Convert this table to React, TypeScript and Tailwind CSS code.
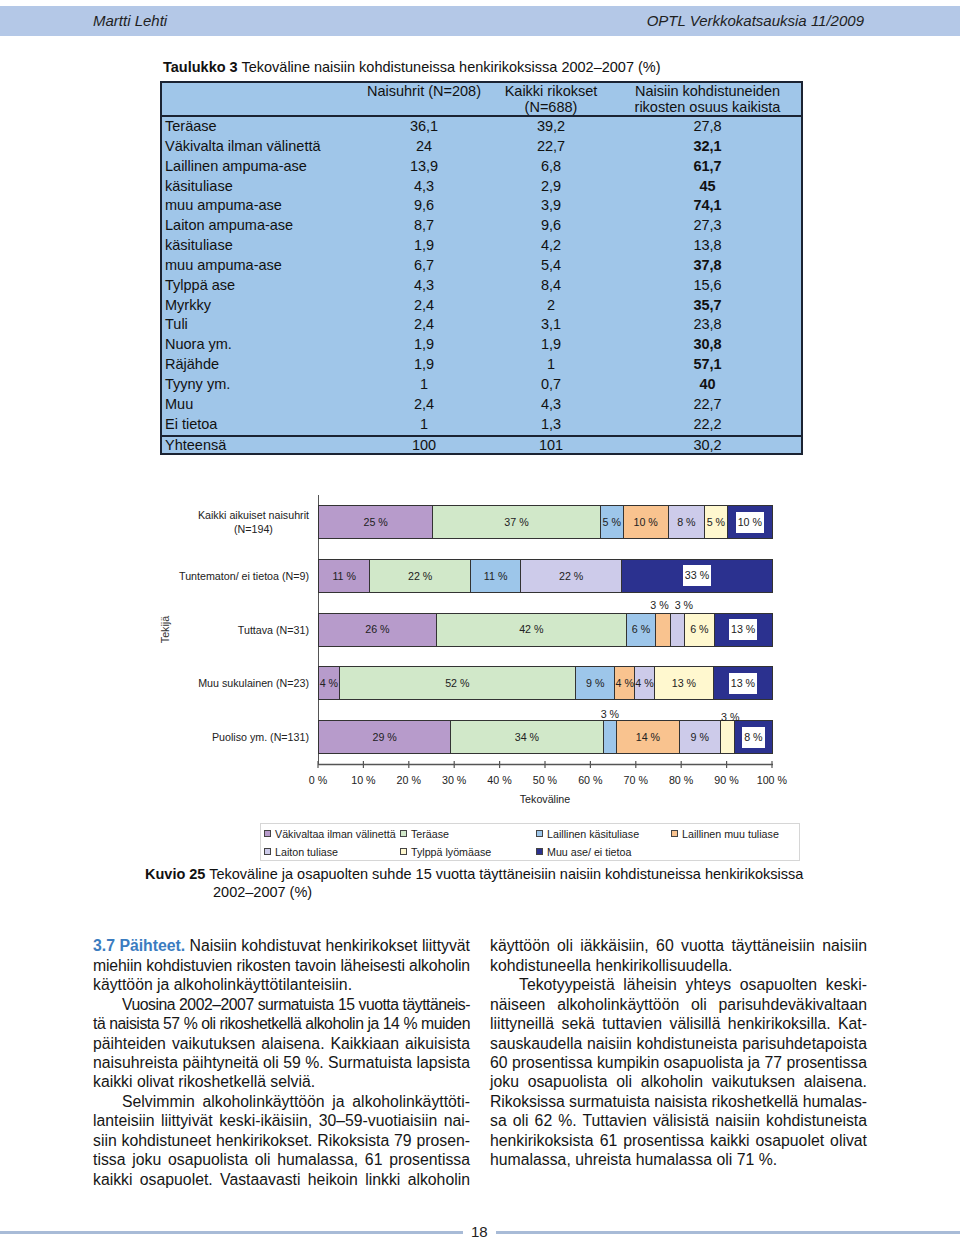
import { useLayoutEffect, useRef, type ReactNode } from "react";

type Seg = { w: number; c: string; t: string; above?: string };
type BarRow = { label: ReactNode; segs: Seg[] };

const P = "bg-[#B79BCB]";
const G = "bg-[#D1E8C9]";
const B = "bg-[#9DC6EA]";
const O = "bg-[#F9C38F]";
const L = "bg-[#CDCBEA]";
const Y = "bg-[#FFF8CF]";
const N = "bg-[#2B318F]";

const bars: BarRow[] = [
  {
    label: (
      <div className="text-center">
        Kaikki aikuiset naisuhrit
        <br />
        (N=194)
      </div>
    ),
    segs: [
      { w: 25, c: P, t: "25 %" },
      { w: 37, c: G, t: "37 %" },
      { w: 5, c: B, t: "5 %" },
      { w: 10, c: O, t: "10 %" },
      { w: 8, c: L, t: "8 %" },
      { w: 5, c: Y, t: "5 %" },
      { w: 10, c: N, t: "10 %" },
    ],
  },
  {
    label: "Tuntematon/ ei tietoa (N=9)",
    segs: [
      { w: 11.11, c: P, t: "11 %" },
      { w: 22.22, c: G, t: "22 %" },
      { w: 11.11, c: B, t: "11 %" },
      { w: 22.22, c: L, t: "22 %" },
      { w: 33.34, c: N, t: "33 %" },
    ],
  },
  {
    label: "Tuttava (N=31)",
    segs: [
      { w: 25.8, c: P, t: "26 %" },
      { w: 41.94, c: G, t: "42 %" },
      { w: 6.45, c: B, t: "6 %" },
      { w: 3.23, c: O, t: "3 %", above: "right-[1px] mb-[2px]" },
      { w: 3.23, c: L, t: "3 %", above: "left-[4px] mb-[2px]" },
      { w: 6.45, c: Y, t: "6 %" },
      { w: 12.9, c: N, t: "13 %" },
    ],
  },
  {
    label: "Muu sukulainen (N=23)",
    segs: [
      { w: 4.35, c: P, t: "4 %" },
      { w: 52.17, c: G, t: "52 %" },
      { w: 8.7, c: B, t: "9 %" },
      { w: 4.35, c: O, t: "4 %" },
      { w: 4.35, c: L, t: "4 %" },
      { w: 13.04, c: Y, t: "13 %" },
      { w: 13.04, c: N, t: "13 %" },
    ],
  },
  {
    label: "Puoliso ym. (N=131)",
    segs: [
      { w: 29.0, c: P, t: "29 %" },
      { w: 33.59, c: G, t: "34 %" },
      { w: 3.05, c: B, t: "3 %", above: "left-1/2 -translate-x-1/2 mb-[0px]" },
      { w: 13.74, c: O, t: "14 %" },
      { w: 9.16, c: L, t: "9 %" },
      { w: 3.05, c: Y, t: "3 %", above: "left-1/2 -translate-x-[35%] -mb-[3px]" },
      { w: 8.41, c: N, t: "8 %" },
    ],
  },
];

const rows: [string, string, string, string, boolean][] = [
  ["Teräase", "36,1", "39,2", "27,8", false],
  ["Väkivalta ilman välinettä", "24", "22,7", "32,1", true],
  ["Laillinen ampuma-ase", "13,9", "6,8", "61,7", true],
  ["käsituliase", "4,3", "2,9", "45", true],
  ["muu ampuma-ase", "9,6", "3,9", "74,1", true],
  ["Laiton ampuma-ase", "8,7", "9,6", "27,3", false],
  ["käsituliase", "1,9", "4,2", "13,8", false],
  ["muu ampuma-ase", "6,7", "5,4", "37,8", true],
  ["Tylppä ase", "4,3", "8,4", "15,6", false],
  ["Myrkky", "2,4", "2", "35,7", true],
  ["Tuli", "2,4", "3,1", "23,8", false],
  ["Nuora ym.", "1,9", "1,9", "30,8", true],
  ["Räjähde", "1,9", "1", "57,1", true],
  ["Tyyny ym.", "1", "0,7", "40", true],
  ["Muu", "2,4", "4,3", "22,7", false],
  ["Ei tietoa", "1", "1,3", "22,2", false],
];

const ticks = ["0 %", "10 %", "20 %", "30 %", "40 %", "50 %", "60 %", "70 %", "80 %", "90 %", "100 %"];

function JLine({
  children,
  justify = true,
  indent = false,
}: {
  children: ReactNode;
  justify?: boolean;
  indent?: boolean;
}) {
  const boxRef = useRef<HTMLDivElement>(null);
  const spanRef = useRef<HTMLSpanElement>(null);
  useLayoutEffect(() => {
    const fit = () => {
      const box = boxRef.current;
      const span = spanRef.current;
      if (!box || !span) return;
      box.style.whiteSpace = "nowrap";
      box.style.textAlign = "left";
      box.style.textAlignLast = "auto";
      span.style.letterSpacing = "0px";
      const avail = box.clientWidth - (indent ? 29 : 0);
      const w = span.getBoundingClientRect().width;
      const n = (span.textContent || "").length;
      if (w > avail - 0.5) {
        span.style.letterSpacing = `${(avail - 0.5 - w) / n}px`;
      }
      box.style.whiteSpace = "";
      box.style.textAlign = "";
      box.style.textAlignLast = "";
    };
    fit();
    if (document.fonts) document.fonts.ready.then(fit);
  }, [indent]);
  return (
    <div
      ref={boxRef}
      className={`${justify ? "text-justify [text-align-last:justify]" : "text-left"} ${
        indent ? "indent-[29px]" : ""
      }`}
    >
      <span ref={spanRef}>{children}</span>
    </div>
  );
}

function Bar({ segs }: { segs: Seg[] }) {
  return (
    <div className="-ml-px flex h-[34px] w-[455px] border border-[#333]">
      {segs.map((s, i) => (
        <div
          key={i}
          className={`relative flex shrink-0 items-center justify-center whitespace-nowrap ${s.c} ${
            i > 0 ? "border-l border-[#333]" : ""
          }`}
          style={{ width: `${s.w}%` }}
        >
          {s.above ? (
            <span className={`absolute bottom-full leading-[13px] ${s.above}`}>{s.t}</span>
          ) : s.c === N ? (
            <span className="inline-block bg-white px-[2px] py-[3px] leading-[15px]">{s.t}</span>
          ) : (
            <span>{s.t}</span>
          )}
        </div>
      ))}
    </div>
  );
}

function LegendItem({ c, t }: { c: string; t: string }) {
  return (
    <div className="flex items-center gap-[4px]">
      <span className={`block h-[7px] w-[7px] border border-[#444] ${c}`} />
      <span>{t}</span>
    </div>
  );
}

export default function App() {
  return (
    <div className="min-h-[1239px] w-[960px] bg-white pt-[6px] text-[#151515] [font-family:'Liberation_Sans',Arial,Helvetica,sans-serif]">
      {/* Header */}
      <div className="flex h-[30px] items-center justify-between bg-[#B4C8E7] pl-[93px] pr-[96px] text-[15px] italic text-[#1f1f1f]">
        <span>Martti Lehti</span>
        <span>OPTL Verkkokatsauksia 11/2009</span>
      </div>

      {/* Table title */}
      <div className="ml-[163px] mt-[22px] text-[14.5px] leading-[18px] text-[#111]">
        <span className="font-bold">Taulukko 3</span> Tekoväline naisiin kohdistuneissa henkirikoksissa 2002–2007 (%)
      </div>

      {/* Table */}
      <div className="ml-[160px] mt-[5px] h-[374px] w-[643px] border-2 border-[#1b2332] bg-[#A0C6E9] text-[14.5px] text-[#111]">
        <div className="grid h-[34px] grid-cols-[198px_128px_126px_187px] border-b-2 border-[#1b2332] leading-[16px]">
          <div />
          <div className="text-center">Naisuhrit (N=208)</div>
          <div className="text-center">
            Kaikki rikokset
            <br />
            (N=688)
          </div>
          <div className="text-center">
            Naisiin kohdistuneiden
            <br />
            rikosten osuus kaikista
          </div>
        </div>
        {rows.map((r, i) => (
          <div key={i} className="grid h-[19.85px] grid-cols-[198px_128px_126px_187px] leading-[19.85px]">
            <div className="pl-[3px]">{r[0]}</div>
            <div className="text-center">{r[1]}</div>
            <div className="text-center">{r[2]}</div>
            <div className={`text-center ${r[4] ? "font-bold" : ""}`}>{r[3]}</div>
          </div>
        ))}
        <div className="grid h-[18.4px] grid-cols-[198px_128px_126px_187px] border-t-2 border-[#1b2332] leading-[16.4px]">
          <div className="pl-[3px]">Yhteensä</div>
          <div className="text-center">100</div>
          <div className="text-center">101</div>
          <div className="text-center">30,2</div>
        </div>
      </div>

      {/* Chart */}
      <div className="mt-[40px] flex h-[269px] text-[10.7px] text-[#222]">
        <div className="ml-[156px] flex w-[20px] items-center justify-center">
          <span className="block -rotate-90 whitespace-nowrap leading-[13px] text-[#333]">Tekijä</span>
        </div>
        <div className="flex w-[133px] flex-col gap-[19.75px] pt-[10px]">
          {bars.map((b, i) => (
            <div key={i} className="flex h-[34px] items-center justify-end whitespace-nowrap leading-[14px]">
              {b.label}
            </div>
          ))}
        </div>
        <div className="ml-[9px] flex w-[455px] flex-col gap-[19.75px] border-l border-[#555] pt-[10px]">
          {bars.map((b, i) => (
            <Bar key={i} segs={b.segs} />
          ))}
        </div>
      </div>
      <div className="-mt-[3px] ml-[317px]">
        <svg width="460" height="7" className="block">
          <line x1="1" y1="3.5" x2="456" y2="3.5" stroke="#555" strokeWidth="1.3" />
          {ticks.map((_, i) => (
            <line key={i} x1={1 + i * 45.4} y1="0" x2={1 + i * 45.4} y2="7" stroke="#555" strokeWidth="1.2" />
          ))}
        </svg>
      </div>
      <div className="ml-[295.3px] mt-[5.5px] flex text-[10.7px] leading-[13px] text-[#222]">
        {ticks.map((t) => (
          <div key={t} className="w-[45.4px] shrink-0 text-center whitespace-nowrap">
            {t}
          </div>
        ))}
      </div>
      <div className="ml-[318px] mt-[6px] w-[454px] text-center text-[10.7px] leading-[13px] text-[#222]">
        Tekoväline
      </div>

      {/* Legend */}
      <div className="ml-[260px] mt-[17.5px] grid h-[38px] w-[540px] grid-cols-[136px_136px_135px_1fr] border border-[#d6d6d6] pl-[3px] pt-[0.5px] text-[10.7px] leading-[18px] text-[#222]">
        <LegendItem c={P} t="Väkivaltaa ilman välinettä" />
        <LegendItem c={G} t="Teräase" />
        <LegendItem c={B} t="Laillinen käsituliase" />
        <LegendItem c={O} t="Laillinen muu tuliase" />
        <LegendItem c={L} t="Laiton tuliase" />
        <LegendItem c={Y} t="Tylppä lyömäase" />
        <LegendItem c={N} t="Muu ase/ ei tietoa" />
      </div>

      {/* Caption */}
      <div className="ml-[145px] mt-[4px] text-[14.5px] leading-[18px] text-[#111]">
        <div className="whitespace-nowrap">
          <span className="font-bold">Kuvio 25</span> Tekoväline ja osapuolten suhde 15 vuotta täyttäneisiin naisiin
          kohdistuneissa henkirikoksissa
        </div>
        <div className="pl-[68px]">2002–2007 (%)</div>
      </div>

      {/* Body text */}
      <div className="mt-[35.3px] flex gap-[20px] pl-[93px] text-[15.8px] leading-[19.45px] text-[#161616]">
        <div className="w-[377px]">
          <JLine>
            <span className="font-bold text-[#3B7CC0]">3.7 Päihteet.</span> Naisiin kohdistuvat henkirikokset liittyvät
          </JLine>
          <JLine>miehiin kohdistuvien rikosten tavoin läheisesti alkoholin</JLine>
          <JLine justify={false}>käyttöön ja alkoholinkäyttötilanteisiin.</JLine>
          <JLine indent>Vuosina 2002–2007 surmatuista 15 vuotta täyttäneis-</JLine>
          <JLine>tä naisista 57 % oli rikoshetkellä alkoholin ja 14 % muiden</JLine>
          <JLine>päihteiden vaikutuksen alaisena. Kaikkiaan aikuisista</JLine>
          <JLine>naisuhreista päihtyneitä oli 59 %. Surmatuista lapsista</JLine>
          <JLine justify={false}>kaikki olivat rikoshetkellä selviä.</JLine>
          <JLine indent>Selvimmin alkoholinkäyttöön ja alkoholinkäyttöti-</JLine>
          <JLine>lanteisiin liittyivät keski-ikäisiin, 30–59-vuotiaisiin nai-</JLine>
          <JLine>siin kohdistuneet henkirikokset. Rikoksista 79 prosen-</JLine>
          <JLine>tissa joku osapuolista oli humalassa, 61 prosentissa</JLine>
          <JLine>kaikki osapuolet. Vastaavasti heikoin linkki alkoholin</JLine>
        </div>
        <div className="w-[377px]">
          <JLine>käyttöön oli iäkkäisiin, 60 vuotta täyttäneisiin naisiin</JLine>
          <JLine justify={false}>kohdistuneella henkirikollisuudella.</JLine>
          <JLine indent>Tekotyypeistä läheisin yhteys osapuolten keski-</JLine>
          <JLine>näiseen alkoholinkäyttöön oli parisuhdeväkivaltaan</JLine>
          <JLine>liittyneillä sekä tuttavien välisillä henkirikoksilla. Kat-</JLine>
          <JLine>sauskaudella naisiin kohdistuneista parisuhdetapoista</JLine>
          <JLine>60 prosentissa kumpikin osapuolista ja 77 prosentissa</JLine>
          <JLine>joku osapuolista oli alkoholin vaikutuksen alaisena.</JLine>
          <JLine>Rikoksissa surmatuista naisista rikoshetkellä humalas-</JLine>
          <JLine>sa oli 62 %. Tuttavien välisistä naisiin kohdistuneista</JLine>
          <JLine>henkirikoksista 61 prosentissa kaikki osapuolet olivat</JLine>
          <JLine justify={false}>humalassa, uhreista humalassa oli 71 %.</JLine>
        </div>
      </div>

      {/* Footer */}
      <div className="mt-[34.85px] flex h-[16px] items-center">
        <div className="h-[3px] w-[463px] bg-[#A8BBD7]" />
        <div className="mx-[8px] text-[15px] leading-[16px] text-[#222]">18</div>
        <div className="h-[3px] flex-1 bg-[#A8BBD7]" />
      </div>
    </div>
  );
}
